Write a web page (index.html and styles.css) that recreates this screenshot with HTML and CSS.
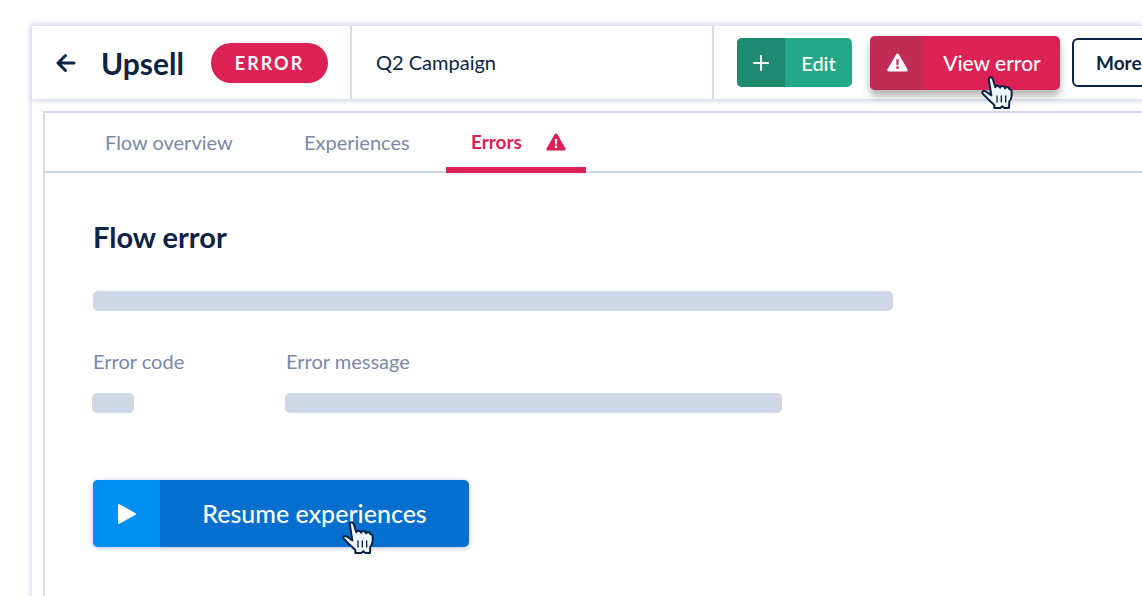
FILE: index.html
```
<!DOCTYPE html>
<html lang="en">
<head>
<meta charset="utf-8">
<meta name="viewport" content="width=device-width, initial-scale=1">
<title>Upsell – Flow error</title>
<link rel="stylesheet" href="styles.css">
</head>
<body>
<svg class="defs" aria-hidden="true">
  <symbol id="warning" viewBox="0 0 20 18">
    <path fill="currentColor" fill-rule="evenodd" d="M8.8 1.1a1.4 1.4 0 0 1 2.4 0l8.3 14.4c.6 1-.1 2.1-1.2 2.100H1.700c-1.100 0-1.800-1.100-1.200-2.100zM8.800 6l.3 5.500h1.800L11.200 6zm1.200 6.600a1.300 1.300 0 1 0 0 2.600 1.300 1.300 0 0 0 0-2.600z"/>
  </symbol>
  <symbol id="hand" viewBox="30 30 99 102">
    <path fill="#f1f5fd" stroke="#0b2344" stroke-width="6" stroke-linejoin="round" d="M57 43Q55 34 62 34Q67 34 69 41L76 64Q77 58 83 59Q89 60 90 65Q92 59 98 60Q104 61 105 67Q107 62 113 64Q118 65 118 70Q125 69 125 78V90Q124 99 118 107L117 126H103L97 121L91 126H73V117L53 98L39 84Q34 77 41 75Q45 74 50 78L64 88Z"/>
    <path fill="none" stroke="#0b2344" stroke-width="4" stroke-linecap="round" d="M81 90V108M94 90V108M107 90V108"/>
  </symbol>
</svg>

<div class="app">
  <header class="topbar">
    <div class="topbar-title">
      <a class="back" href="#" aria-label="Back">
        <svg width="20" height="20" viewBox="0 0 20 20"><path fill="none" stroke="currentColor" stroke-width="3" stroke-linecap="round" stroke-linejoin="round" d="M18 10H2.500M9.500 2.500 2 10l7.500 7.500"/></svg>
      </a>
      <h1>Upsell</h1>
      <span class="badge">ERROR</span>
    </div>
    <div class="topbar-campaign">Q2 Campaign</div>
    <div class="topbar-actions">
      <button class="btn btn-edit" type="button">
        <span class="btn-icon"><svg width="16" height="16" viewBox="0 0 16 16"><path fill="none" stroke="currentColor" stroke-width="2" stroke-linecap="round" d="M8 1v14M1 8h14"/></svg></span>
        <span class="btn-label">Edit</span>
      </button>
      <button class="btn btn-error" type="button">
        <span class="btn-icon"><svg width="21" height="19"><use href="#warning"/></svg></span>
        <span class="btn-label">View error</span>
        <svg class="hand" width="33" height="34"><use href="#hand"/></svg>
      </button>
      <button class="btn-more" type="button">More</button>
    </div>
  </header>

  <main class="panel">
    <nav class="tabs">
      <a class="tab" href="#">Flow overview</a>
      <a class="tab" href="#">Experiences</a>
      <a class="tab tab-active" href="#" aria-current="page">Errors <svg width="20" height="18"><use href="#warning"/></svg></a>
    </nav>
    <section class="content">
      <h2>Flow error</h2>
      <div class="bar bar-summary"></div>
      <dl class="details">
        <div class="detail-code"><dt>Error code</dt><dd class="bar"></dd></div>
        <div class="detail-message"><dt>Error message</dt><dd class="bar"></dd></div>
      </dl>
      <button class="btn btn-resume" type="button">
        <span class="btn-icon"><svg width="20" height="22" viewBox="0 0 20 22"><path fill="currentColor" stroke="currentColor" stroke-width="2" stroke-linejoin="round" d="M2 2v18l16-9z"/></svg></span>
        <span class="btn-label">Resume experiences</span>
        <svg class="hand" width="33" height="34"><use href="#hand"/></svg>
      </button>
    </section>
  </main>
</div>
</body>
</html>
```
FILE: styles.css
```
* { box-sizing: border-box; }

body {
  margin: 0;
  min-height: 100vh;
  overflow: hidden;
  background: #fff;
  color: #0b2344;
  font-family: Lato, "Open Sans", sans-serif;
  font-size: 20px;
  line-height: 24px;
}

h1, h2, dl, dd { margin: 0; }
a { color: inherit; text-decoration: none; }
svg { display: block; }
.defs { position: absolute; width: 0; height: 0; }

.app {
  display: flex;
  flex-direction: column;
  min-height: calc(100vh - 26px);
  margin: 26px 0 0 32px;
  box-shadow: 0 0 6px 1px #cfd4e6;
}

.topbar {
  display: flex;
  height: 73px;
  box-shadow: 0 1px 5px 1px #d4d9e9;
}

.topbar-title {
  display: flex;
  flex: none;
  align-items: center;
  width: 320px;
  padding-left: 24px;
  border-right: 2px solid #d5dbea;
}

h1 {
  width: 110px;
  margin-left: 25px;
  font-size: 30px;
  line-height: 36px;
}

.badge {
  width: 117px;
  border-radius: 20px;
  background: #dc2154;
  color: #fff;
  font-size: 18px;
  font-weight: 700;
  letter-spacing: 2px;
  line-height: 40px;
  text-align: center;
}

.topbar-campaign {
  flex: none;
  width: 362px;
  padding-left: 24px;
  border-right: 2px solid #d5dbea;
  line-height: 72px;
}

.topbar-actions {
  display: flex;
  flex: none;
  align-items: center;
  padding-left: 23px;
}

.btn {
  position: relative;
  display: flex;
  align-items: stretch;
  padding: 0;
  border: 0;
  border-radius: 5px;
  color: #fff;
  font: inherit;
  font-weight: 500;
  cursor: pointer;
}

.btn-icon {
  display: flex;
  align-items: center;
  justify-content: center;
  border-radius: 5px 0 0 5px;
}

.btn-label { flex: 1; align-self: center; text-align: center; }

.btn-edit { width: 115px; height: 49px; background: #24a888; }
.btn-edit .btn-icon { width: 48px; background: #1e8a70; }

.btn-error {
  width: 190px;
  height: 54px;
  margin-left: 18px;
  background: #dc2154;
  box-shadow: 0 6px 8px rgb(0 0 0 / 30%);
  font-size: 21px;
}
.btn-error .btn-icon { width: 54px; background: #c02c55; }

.btn-more {
  width: 120px;
  height: 49px;
  margin-left: 12px;
  padding: 0 0 0 22px;
  border: 2px solid #0b2344;
  border-radius: 6px;
  background: #fff;
  color: #0b2344;
  font: inherit;
  font-size: 19px;
  font-weight: 700;
  text-align: left;
}

.hand { position: absolute; overflow: visible; }
.btn-error .hand { left: 110px; top: 40px; }
.btn-resume .hand { left: 248px; top: 41px; }

.panel {
  flex: 1;
  margin: 12px 0 0 11px;
  border-top: 2px solid #d0d7e7;
  border-left: 2px solid #d5dbea;
}

.tabs {
  display: flex;
  height: 60px;
  padding-left: 60px;
  border-bottom: 2px solid #d0d7e7;
  color: #7b88a8;
}

.tab { width: 199px; line-height: 58px; }

.tab-active {
  display: flex;
  align-items: center;
  justify-content: space-between;
  width: 140px;
  height: 60px;
  margin-left: -57px;
  padding: 3px 20px 0 25px;
  border-bottom: 6px solid #dc2154;
  color: #dc2154;
  font-size: 19px;
  font-weight: 700;
}

.content { padding: 46px 48px; }

h2 { font-size: 29px; line-height: 36px; }

.bar { height: 20px; border-radius: 5px; background: #cfd6e4; }
.bar-summary { max-width: 800px; margin-top: 36px; }

.details {
  display: flex;
  margin-top: 38px;
  color: #7b88a8;
}
.details .bar { margin: 20px 0 0 -1px; }
.detail-code { width: 193px; }
.detail-code .bar { width: 42px; }
.detail-message { width: 496px; }

.btn-resume {
  width: 376px;
  height: 67px;
  margin-top: 67px;
  background: #056fd0;
  box-shadow: 0 1px 5px #b4c0dc;
  font-size: 25px;
}
.btn-resume .btn-icon { width: 67px; background: #0190f1; }
.btn-resume .btn-label { padding-bottom: 2px; }
```
